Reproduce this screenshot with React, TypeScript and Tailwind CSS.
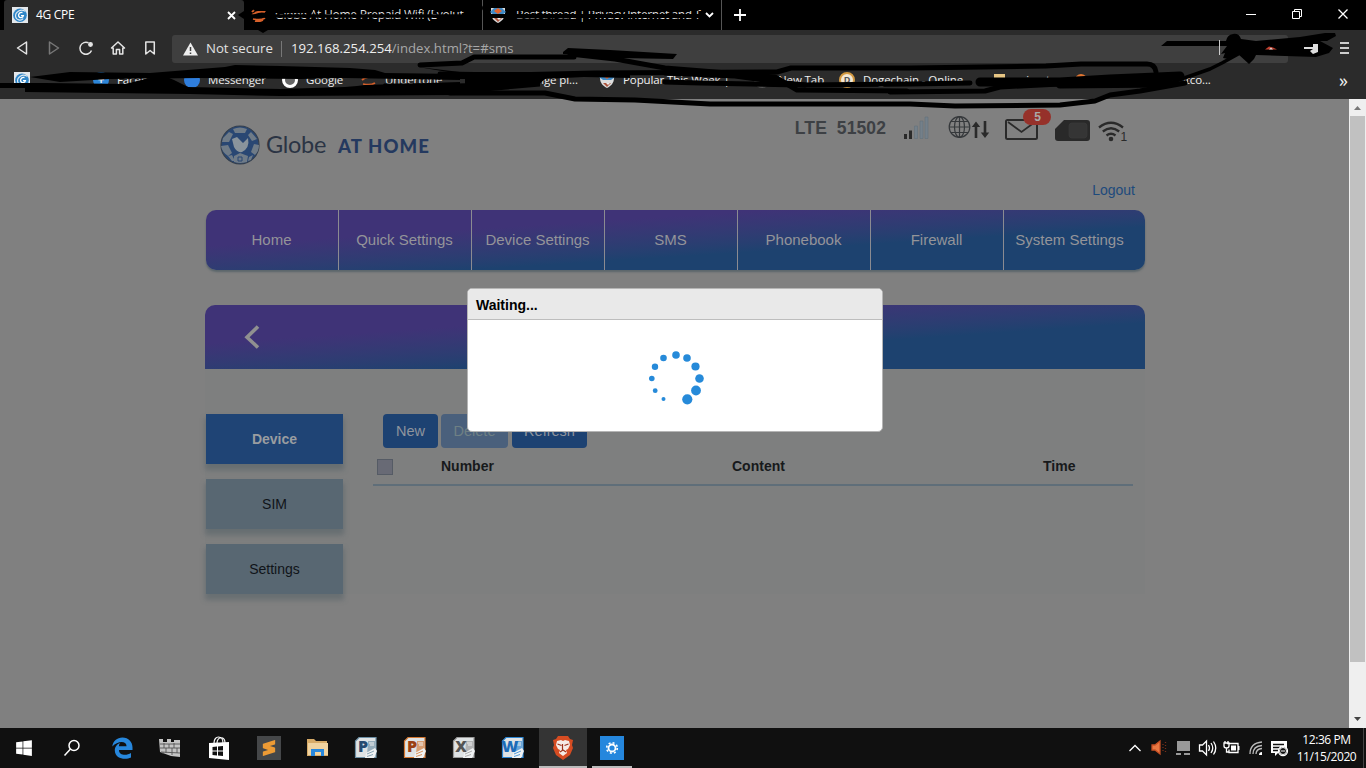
import { ReactNode } from "react";
import { SiSublimetext } from "react-icons/si";
import { FaWindows } from "react-icons/fa";
import { clsx } from "clsx";

const navItems = [
  "Home",
  "Quick Settings",
  "Device Settings",
  "SMS",
  "Phonebook",
  "Firewall",
];

const spinnerDots = [
  { x: 27, y: 4, r: 3.8 },
  { x: 38, y: 7, r: 3.8 },
  { x: 46.5, y: 15.5, r: 4.1 },
  { x: 50.5, y: 27.5, r: 4.3 },
  { x: 47, y: 39.5, r: 4.9 },
  { x: 38.3, y: 48.3, r: 5.1 },
  { x: 14.5, y: 48, r: 2 },
  { x: 6.2, y: 39.7, r: 2.4 },
  { x: 2.8, y: 27.5, r: 2.8 },
  { x: 6, y: 15.7, r: 3.2 },
  { x: 14.5, y: 7, r: 3.3 },
];

function GlobeFavicon() {
  return (
    <svg width="16" height="16" viewBox="0 0 16 16" className="shrink-0">
      <rect width="16" height="16" fill="#e4e8ec" />
      <circle cx="8" cy="8.3" r="6.8" fill="#2f86c8" />
      <path d="M13 4.2C8.500 1.500 3 5 3.600 9.500c.6 3.700 5.300 4.600 7.600 2.100" fill="none" stroke="#dfeaf3" strokeWidth="1.200" />
      <path d="M10.500 5.500C7.500 4.800 6 7.500 6.800 9.400c1 2 4.200 1.400 4.600-.8H9" fill="none" stroke="#fff" strokeWidth="1.300" />
    </svg>
  );
}

function ShieldFavicon() {
  return (
    <svg width="16" height="16" viewBox="0 0 16 16" className="shrink-0">
      <path d="M1 1h14v5c0 5-3 8-7 10-4-2-7-5-7-10z" fill="#ddd" />
      <path d="M0 5l4-4h8l4 4-4 3H4z" fill="#3f8ac6" />
      <path d="M4 4l4-3 4 3-4 3z" fill="#e0632f" />
      <path d="M4 11l4 4 4-4z" fill="#a9523b" />
      <path d="M7 11l2 2 2-2z" fill="#eee" />
    </svg>
  );
}

function SwirlFavicon() {
  return (
    <svg width="16" height="14" viewBox="0 0 16 14" className="shrink-0">
      <path d="M1 4c3-4 10-4 14-1M1 7c3-3 9-4 13-3M2 11c4 1 9 1 12-1M4 13c3 1 6 0 8-1" fill="none" stroke="#d7602a" strokeWidth="1.800" />
    </svg>
  );
}

function Tabs() {
  return (
    <div className="flex h-[30px] bg-black text-[12px] text-white">
      <div className="ml-1 flex w-[240px] items-center rounded-t-[3px] bg-[#2b2b2b] pl-2">
        <GlobeFavicon />
        <span className="ml-2 tracking-[-0.3px]">4G CPE</span>
        <svg width="9" height="9" viewBox="0 0 9 9" className="mr-[8px] ml-auto">
          <path d="M1 1l7 7M8 1L1 8" stroke="#fff" strokeWidth="1.800" />
        </svg>
      </div>
      <div className="flex w-[239px] items-center border-r border-[#555] pl-[7px]">
        <SwirlFavicon />
        <span className="ml-2 whitespace-nowrap tracking-[-0.25px] text-[#ddd]">
          Globe At Home Prepaid Wifi (Evolut
        </span>
      </div>
      <div className="flex w-[239px] items-center border-r border-[#555] pl-[7px]">
        <ShieldFavicon />
        <span className="ml-[10px] w-[187px] whitespace-nowrap tracking-[-0.42px] text-[#ddd]">
          Best thread | Privacy Internet and T
        </span>
        <svg width="9" height="6" viewBox="0 0 9 6" className="ml-[2px]">
          <path d="M1 1l3.500 3.500L8 1" fill="none" stroke="#fff" strokeWidth="1.800" />
        </svg>
      </div>
      <div className="flex w-[36px] items-center justify-center">
        <svg width="12" height="12" viewBox="0 0 12 12">
          <path d="M6 0v12M0 6h12" stroke="#fff" strokeWidth="1.800" />
        </svg>
      </div>
      <div className="mr-[17px] ml-auto flex items-center">
        <svg width="104" height="12" viewBox="0 0 104 12" fill="none" stroke="#fff">
          <path d="M1 5.500h10M47.500 2.500h7v7h-7zM49.500 2.500v-2h7v7h-2" />
          <path d="M93.500 0.500l9 9M102.500 0.500l-9 9" strokeWidth="1.300" />
        </svg>
      </div>
    </div>
  );
}

function Toolbar() {
  return (
    <div className="flex h-9 items-center bg-[#2b2b2b] text-[13px]">
      <svg width="172" height="36" viewBox="0 0 172 36" fill="none" stroke="#e4e4e4" strokeWidth="1.500" strokeLinejoin="round">
        <path d="M17.500 18l9-6v12z" />
        <path d="M58.500 18l-9-6v12z" stroke="#777" />
        <path d="M91.500 20.500A6 6 0 1 1 88.500 12.800" />
        <circle cx="90.500" cy="14.500" r="1.700" fill="#e4e4e4" />
        <path d="M111.500 18l6.500-6 6.500 6h-1.700v6h-3.200v-4.500h-3.200V24h-3.200v-6z" />
        <path d="M145.800 12h8.500v12l-4.200-3.500-4.300 3.500z" />
      </svg>
      <div className="mt-px flex h-7 w-[1116px] items-center rounded-[3px] bg-[#3f3f3f] pl-[11px] whitespace-nowrap">
        <svg width="15" height="14" viewBox="0 0 15 14">
          <path d="M7.500 0.500L15 13.500H0z" fill="#eee" />
          <path d="M7.500 5v4M7.500 10.500v1.500" stroke="#3f3f3f" strokeWidth="1.500" />
        </svg>
        <span className="ml-2 text-[13.2px] text-[#e2e2e2]">Not secure</span>
        <span className="ml-2 h-4 w-px bg-[#777]" />
        <span className="ml-[9px] text-[13.200px] text-[#eee]">
          192.168.254.254
          <span className="text-[#a8a8a8]">/index.html?t=#sms</span>
        </span>
      </div>
      <div className="mr-[17px] ml-auto flex flex-col gap-[3px]">
        <i className="h-[2px] w-[9px] bg-[#ccc]" />
        <i className="h-[2px] w-[9px] bg-[#ccc]" />
        <i className="h-[2px] w-[9px] bg-[#ccc]" />
      </div>
    </div>
  );
}

function Bookmark({ className, icon, label }: { className: string; icon: ReactNode; label: string }) {
  return (
    <div className={clsx("flex shrink-0 items-center gap-2", className)}>
      {icon}
      <span className="tracking-[-0.1px] whitespace-nowrap">{label}</span>
    </div>
  );
}

function Bookmarks() {
  return (
    <div className="flex h-[33px] items-center overflow-hidden bg-[#2b2b2b] pb-[6px] pl-[14px] text-[11.5px] text-[#f0f0f0]">
      <Bookmark className="w-[79px]" icon={<GlobeFavicon />} label="" />
      <Bookmark className="w-[91px]" icon={<i className="flex size-4 items-center justify-center rounded-full bg-[#2d86d8] font-bold not-italic">+</i>} label="Facebook" />
      <Bookmark className="w-[98px]" icon={<i className="size-4 rounded-full bg-[#2f7edd]" />} label="Messenger" />
      <Bookmark className="w-[79px]" icon={<i className="size-4 rounded-full border-[3px] border-white bg-[#666]" />} label="Google" />
      <Bookmark className="w-[176px]" icon={<SwirlFavicon />} label="Undertone" />
      <Bookmark className="w-[62px]" icon={null} label="nge pl..." />
      <Bookmark className="w-[155px]" icon={<ShieldFavicon />} label="Popular This Week |" />
      <Bookmark className="w-[85px]" icon={<i className="size-4 rounded-full bg-[#555]" />} label="New Tab" />
      <Bookmark className="w-[155px]" icon={<i className="flex size-4 items-center justify-center rounded-full border-2 border-[#d39a42] bg-[#f4e8d5] text-[9px] font-bold text-[#555] not-italic">D</i>} label="Dogechain - Online" />
      <Bookmark className="w-[81px]" icon={<i className="h-3 w-[11px] bg-[#e7c684]" />} label="animator" />
      <Bookmark className="w-[108px]" icon={<i className="size-3 rounded-full bg-[#e27632]" />} label="" />
      <Bookmark className="" icon={null} label="itco..." />
      <span className="mr-[18px] ml-auto text-[18px] leading-none">»</span>
    </div>
  );
}

// Freehand marker strokes lying over the browser chrome
function Scribbles() {
  return (
    <svg className="pointer-events-none absolute top-0 left-0" width="1366" height="115" viewBox="0 0 1366 115">
      <g fill="none" stroke="#000" strokeLinejoin="round" strokeLinecap="round">
        <path d="M247 16H478" strokeWidth="3.500" />
        <path d="M256 8h50M470 8h10" strokeWidth="6" />
        <path d="M275 10h35M435 8h40" strokeWidth="6" />
        <path d="M440 19h28" strokeWidth="5" />
        <path d="M486 16h215" strokeWidth="4" />
        <path d="M512 8h185" strokeWidth="6" />
        <path d="M512 20.500h58M585 21h15M612 21h84" strokeWidth="4" />
        <path d="M420 65l42-2 12-6 100 0" strokeWidth="5" />
        <path d="M570 54l45 5 50 9 50 4 60 5 22 13 110 1" strokeWidth="5" />
        <path d="M440 74l70 1 85-2 182-1 14-4h120l135-2 35-2h66q8 0 9 8" strokeWidth="5" />
        <path d="M665 73l70 3 50 7 20 2" strokeWidth="5" />
        <path d="M665 82l35 1 100 2 110-1 60-1" strokeWidth="5" />
        <path d="M450 93h95l30 6 60 1 75 4 200 0 45 2 105-1 35-4 15-6 30-4 45-8" strokeWidth="5" />
        <path d="M890 92l95-1 15-4 60-3 110-5" strokeWidth="5" />
        <path d="M1170 83l40-14 12-6 18-10" strokeWidth="3.500" />
        <path d="M980 82h80l50-3 70-3M1060 84l110-1" strokeWidth="9" />
      </g>
      <path d="M30 77l40-5 80 1 75-6 10-2 45 1 70 2 25 2 10 3 75 1v6l-115-2-45 1-100-1-90 1-50 3z" />
      <path d="M0 83h45l80 1 37-9 12 5 14 7 92 2 65-2 12-1 8-1 95-3v13l-180 1-90-2-165-2v-4H0z" />
      <path d="M418 67l42 5h140l30 3v3l-46-1-39 2-8 7h-72v-7h-70v-5h65z" />
      <path d="M384 83.500h70l86-2v5l-90 8-70-5z" />
      <path d="M563 52l5-4 42 2 67 4-4 5-53-1-57-4z" />
      <path d="M1161 46l6-5h59q1-6 7-7 6-1 8 5l15 2 44-4 25-4h10l1 3-9 5h-7l13 7-4 5-13 4-60-2-2 4-5 5-11-10-10 5-5-1 2-5-4 1 6-8z" />
      <path d="M1265 49.500l4-3 4 1 4 2z" fill="#c2402f" />
      <path d="M1269 49.500l2-2 2 2z" fill="#ddd" />
      <path d="M1304 47h9v-3h5v8l-5 2-3-3 3-2h-9z" fill="#ddd" />
      <path d="M1219.500 40v15" stroke="#ccc" />
      <path d="M238 15l6-4v8zM258 30l5 3 5-3z" />
    </svg>
  );
}

function StatusIcons() {
  return (
    <svg width="230" height="40" viewBox="900 106 230 40" className="shrink-0">
      <g fill="#2a2a2a">
        <path d="M904 134h3v5h-3zM909 130.500h3v8.500h-3z" />
      </g>
      <g fill="#74808a" stroke="#63717b" strokeWidth=".6">
        <path d="M914.500 126h3v12.500h-3zM920 121h3v17.500h-3zM925 117h3v21.500h-3z" />
      </g>
      <g fill="none" stroke="#35383b" strokeWidth="1.200">
        <circle cx="959.500" cy="127" r="10.300" />
        <ellipse cx="959.500" cy="127" rx="5" ry="10.300" />
        <path d="M959.500 117v20M949 127h21M951 121.500h17M951 132.500h17" />
      </g>
      <path d="M976 138v-14M985 121v14" stroke="#2a2a2a" strokeWidth="2.600" />
      <path d="M971.800 127l4.200-5.500 4.200 5.500zM980.800 132.500l4.200 5.500 4.200-5.500z" fill="#2a2a2a" />
      <rect x="1006" y="120" width="31" height="19" rx="1.500" fill="none" stroke="#2a2a2a" strokeWidth="2" />
      <path d="M1008 122l13.500 10 13.500-10" fill="none" stroke="#2a2a2a" strokeWidth="1.700" />
      <rect x="1023" y="109" width="28" height="16" rx="8" fill="#96312a" />
      <text x="1037.500" y="121" textAnchor="middle" fontSize="12" fontWeight="bold" fill="#a9a9a9">5</text>
      <path d="M1064 120h23q3 0 3 3v15q0 3-3 3h-29q-3 0-3-3v-9z" fill="#292929" />
      <rect x="1069" y="123" width="18" height="15" rx="3" fill="#353535" stroke="#3b3b3b" strokeWidth=".7" />
      <g fill="none" stroke="#2a2a2a" strokeWidth="2.300">
        <path d="M1099 127.500q12-9.500 24 0M1102.800 131.500q8.200-6.500 16.400 0M1106.500 135.500q4.500-3.500 9 0" />
      </g>
      <circle cx="1111" cy="139" r="2.300" fill="#2a2a2a" />
      <text x="1120.500" y="141" fontSize="12" fill="#2a2a2a">1</text>
    </svg>
  );
}

function GlobeLogo() {
  return (
    <div className="mt-[26px] flex h-10 items-center self-start pl-[15px]">
      <svg width="40" height="40" viewBox="0 0 40 40">
        <circle cx="20" cy="20" r="19" fill="#294773" stroke="#343f4d" strokeWidth="1.200" />
        <g fill="#6f7b87">
          <path d="M13 4q7-3 14 0l-2 4H15zM3 13l6-6 4 2-4 8H2zM31 7l6 7-5 2-4-6zM1 21l7-1 4 8-4 3q-6-4-7-10zM39 20l-5-1-3 8 4 3q4-4 4-10zM14 31l6-3 8 3-1 6q-7 2-13 0zM8 31l4-1 3 6-3 0zM29 32l4-2-2 5-3 1z" />
          <path d="M12 14l5-2 6 6 5-5q2 10-6 14-5 1-8-5z" fill="#8a949c" />
        </g>
        <path d="M18 36v-4h4v4z" fill="none" stroke="#294773" />
      </svg>
      <span className="ml-[6px] font-[Lato] text-[23.5px] leading-none tracking-[-0.3px] text-[#2b3444]">Globe</span>
      <span className="mt-[3px] ml-[12px] font-[Lato] text-[18.5px] leading-none font-black tracking-[1.1px] text-[#24395f]">AT HOME</span>
    </div>
  );
}

function SideButton({ label, active }: { label: string; active?: boolean }) {
  return (
    <div
      className={clsx(
        "flex h-[50px] w-[137px] items-center justify-center text-[14px] shadow-[0_5px_5px_1px_rgba(75,90,98,0.45)]",
        active ? "bg-[#1f4475] font-bold text-[#9a9da0]" : "bg-[#586772] text-[#101419]"
      )}
    >
      {label}
    </div>
  );
}

function RouterPage() {
  return (
    <div className="h-[629px] w-[1349px] bg-[#808080] pl-[205px] font-['Liberation_Sans',sans-serif]">
      <div className="w-[940px]">
        <header className="flex h-[111px] justify-between">
          <GlobeLogo />
          <div className="mr-[10px] flex flex-col items-end pt-[7px]">
            <div className="flex items-start">
              <span className="mt-[12px] mr-[14px] text-[17.500px] leading-[21px] font-bold tracking-[0.1px] whitespace-pre text-[#3d4044]">LTE  51502</span>
              <div className="mr-[5px]">
                <StatusIcons />
              </div>
            </div>
            <span className="mt-[34px] text-[14px] leading-5 text-[#1d4a7c]">Logout</span>
          </div>
        </header>

        <nav className="ml-px flex h-[60px] overflow-hidden rounded-[10px] bg-linear-to-br from-[#3f3377] from-30% to-[#1d426f] to-64% text-[15px] text-[#949499] shadow-[0_2px_2px_rgba(60,80,90,0.55)]">
          {navItems.map((item) => (
            <div key={item} className="flex w-[133px] items-center justify-center border-r border-[#8b8b91] pr-px">
              {item}
            </div>
          ))}
          <div className="flex w-[131px] items-center justify-center">System Settings</div>
        </nav>

        <div className="mt-[35px] flex h-16 items-center rounded-t-[10px] bg-linear-to-br from-[#3f3377] from-30% to-[#1d426f] to-64% pl-[39px]">
          <svg width="16" height="24" viewBox="0 0 16 24">
            <path d="M14 1.500L3 12.300 14 22.500" fill="none" stroke="#909090" strokeWidth="3.600" />
          </svg>
        </div>

        <div className="flex bg-[#7e7f7f] pt-[45px]">
          <div className="flex flex-col gap-[15px] pl-px">
            <SideButton label="Device" active />
            <SideButton label="SIM" />
            <SideButton label="Settings" />
          </div>
          <div className="ml-[30px] w-[760px]">
            <div className="flex gap-[3px] pl-[10px] text-[14.500px] text-[#8f959d]">
              <div className="flex h-[34px] w-[55px] items-center justify-center rounded-[4px] bg-[#1d4272] pt-px">New</div>
              <div className="flex h-[34px] w-[67px] items-center justify-center rounded-[4px] bg-[#4a607c] pt-px text-[#6f8084]">Delete</div>
              <div className="ml-px flex h-[34px] w-[75px] items-center justify-center rounded-[4px] bg-[#1d4272] pt-px">Refresh</div>
            </div>
            <div className="flex h-[38px] items-center border-b-2 border-[#5f6e79] pl-1 text-[14px] font-bold text-[#17191b]">
              <i className="mt-px size-4 border border-[#555b65] bg-[#686a75]" />
              <span className="ml-12 w-[291px]">Number</span>
              <span className="w-[311px]">Content</span>
              <span>Time</span>
            </div>
          </div>
        </div>
      </div>
    </div>
  );
}

function WaitingDialog() {
  return (
    <div className="absolute top-[288px] left-[467px] h-[144px] w-[416px] overflow-hidden rounded-[5px] border border-[#b5b5b5] bg-white font-['Liberation_Sans',sans-serif]">
      <div className="flex h-[31px] items-center border-b border-[#bdbdbd] bg-[#e9e9e9] pt-[2px] pl-2 text-[14px] font-bold text-black">
        Waiting...
      </div>
      <div className="flex justify-center pt-[31px] pl-[3px]">
        <svg width="56" height="56" viewBox="0 0 56 56" className="overflow-visible" fill="#268ad9">
          {spinnerDots.map((d, i) => (
            <circle key={i} cx={d.x} cy={d.y} r={d.r} />
          ))}
        </svg>
      </div>
    </div>
  );
}

function Scrollbar() {
  return (
    <div className="flex w-[17px] flex-col items-center bg-[#efefef]">
      <svg width="17" height="17" viewBox="0 0 17 17">
        <path d="M5 11l3.500-4 3.500 4z" fill="#777" />
      </svg>
      <div className="h-[546px] w-[15px] bg-[#c1c1c1]" />
      <svg width="17" height="17" viewBox="0 0 17 17" className="mt-auto">
        <path d="M5 6l3.500 4L12 6z" fill="#444" />
      </svg>
    </div>
  );
}

function OfficeIcon({ letter, color, border }: { letter: string; color: string; border: string }) {
  return (
    <svg width="24" height="24" viewBox="0 0 24 24" className="-ml-[3px]">
      <path d="M5 1.500h17v20H1.500V5z" fill="#dfe3e5" stroke={border} strokeWidth="1.200" />
      <path d="M14 5h7v15h-8z" fill={border} opacity=".65" />
      <path d="M15 7h5M16 9h4" stroke="#eee" />
      <text x="9" y="16" textAnchor="middle" fontSize="16" fontWeight="900" fill={color}>{letter}</text>
      <path d="M12 17l9-5 2 3-3 7h-9z" fill="#f0f2f3" />
      <path d="M13 18l7-3M13 20.500l6-2" stroke={border} strokeWidth=".8" />
    </svg>
  );
}

function TaskSlot({ children }: { children: ReactNode }) {
  return <div className="flex h-10 w-[49px] items-center justify-center">{children}</div>;
}

function Taskbar() {
  return (
    <div className="flex h-10 bg-[#101010] text-white">
      <TaskSlot>
        <FaWindows size={18} className="ml-[-1px]" />
      </TaskSlot>
      <TaskSlot>
        <svg width="18" height="18" viewBox="0 0 18 18" fill="none" stroke="#fff" strokeWidth="1.500" className="ml-[-4px]">
          <circle cx="11" cy="6.500" r="5" />
          <path d="M7.500 10L1.500 16.500" />
        </svg>
      </TaskSlot>
      <TaskSlot>
        <svg width="21" height="22" viewBox="0 0 21 22" fill="#2787dc">
          <path d="M0.300 9.500C1 4 5 .5 10.500 .5c6 0 10 4.500 10 10V13H7c0 5.500 7.500 6 12 3v4.500C14 23 3 22.500 2.800 13.500 2.700 9.800 5.200 7 8 6 7.300 7 7 8.200 6.900 9.200h7.600C14.800 3.500 5.500 3.500 0.300 9.500z" />
        </svg>
      </TaskSlot>
      <TaskSlot>
        <svg width="22" height="20" viewBox="0 0 22 20" className="-ml-[3px]">
          <path d="M0 1h4v3h4V1h4v3h3V2h6v17l-9-1L1 14z" fill="#c4c4c4" />
          <path d="M1 6h20M1 10h20M2 14l19 1M5 5v5M10 6v4M15 5v5M7 10v5M13 10v7M18 10v5M4 14v2" stroke="#555" strokeWidth=".9" fill="none" />
        </svg>
      </TaskSlot>
      <TaskSlot>
        <svg width="22" height="25" viewBox="0 0 22 25" className="-ml-[3px]">
          <path d="M1 7l20-1v18L1 22z" fill="#fff" />
          <path d="M6 7c0-8 9-8 9 0M9 7c0-7 8-7 8 0" fill="none" stroke="#fff" strokeWidth="1.200" />
          <path d="M4.500 11l4.500-.5v4H4.500zM10 10.500l5-.5v4.500h-5zM4.500 15.500H9v4l-4.500-.5zM10 15.500h5V20l-5-.5z" fill="#111" />
        </svg>
      </TaskSlot>
      <TaskSlot>
        <div className="-ml-[1px] flex size-6 items-center justify-center bg-[#454749]">
          <SiSublimetext size={16} color="#ed9b35" />
        </div>
      </TaskSlot>
      <TaskSlot>
        <svg width="22" height="20" viewBox="0 0 22 20" className="-ml-[2px]">
          <path d="M0 1h7l2 2h11v4h1v11H0z" fill="#d7ab68" />
          <path d="M1 5h20v12H1z" fill="#f0d3a0" />
          <path d="M4 18v-7h13v7h-3v-4H8v4z" fill="#2787dc" />
        </svg>
      </TaskSlot>
      <TaskSlot><OfficeIcon letter="P" color="#254b72" border="#6c8fa5" /></TaskSlot>
      <TaskSlot><OfficeIcon letter="P" color="#9b3f13" border="#d47832" /></TaskSlot>
      <TaskSlot><OfficeIcon letter="X" color="#555" border="#999" /></TaskSlot>
      <TaskSlot><OfficeIcon letter="W" color="#1d6cb8" border="#2d86d2" /></TaskSlot>
      <div className="flex w-12 items-center justify-center border-b-2 border-[#bbb] bg-[#343434]">
        <svg width="22" height="25" viewBox="0 0 22 25">
          <path d="M6 1h10l2 3 3 1-1 5 1 3-3 7-7 5-7-5-3-7 1-3-1-5 3-1z" fill="#d64c22" />
          <path d="M5 6l4-1 2 1 2-1 4 1 1 4-2 4-2 1 1 3-4 3-4-3 1-3-2-1-2-4z" fill="#f5ece7" />
          <path d="M5.500 9l4 1.500M16.500 9l-4 1.500M10.500 9v6M8 17l3-2 3 2" stroke="#9d321b" strokeWidth="1.200" fill="none" />
        </svg>
      </div>
      <div className="ml-[5px] flex w-10 items-center justify-center border-b-2 border-[#bbb] pt-[2px]">
        <div className="flex size-6 items-center justify-center bg-[#2587dd]">
          <svg width="14" height="14" viewBox="0 0 14 14" fill="none" stroke="#fff">
            <circle cx="7" cy="7" r="3.500" strokeWidth="1.800" />
            <circle cx="7" cy="7" r="5.300" strokeWidth="1.600" strokeDasharray="2 2.160" />
          </svg>
        </div>
      </div>

      <div className="ml-auto flex items-center">
        <svg width="166" height="30" viewBox="1126 733 166 30" fill="none" stroke="#fff" strokeWidth="1.300">
          <path d="M1129.500 751l5.500-5.500 5.500 5.500" />
          <path d="M1152 745h3l5-4v13l-5-4h-3z" fill="#e97843" stroke="#c64f24" />
          <path d="M1163 744v7M1165.500 742v11" stroke="#762f1a" strokeDasharray="1 2" />
          <path d="M1177 741h13v10h-13zM1176 753h5v2h-5zM1184 753h6v2h-6z" fill="#999" stroke="none" />
          <path d="M1199.500 745h3l4-4v14l-4-4h-3zM1208.500 745q2 3 0 6M1211 743q3.500 5 0 10M1213.500 741.500q4.500 6.500 0 13" />
          <path d="M1227 743.500h11v9h-9v-3M1224 743h5v3q0 2-2.500 2t-2.500-2zM1225 743v-2M1228 743v-2M1226.500 748v4h2" />
          <path d="M1231 745.500h5v5h-5zM1238 746h1.500v4h-1.500z" fill="#fff" stroke="none" />
          <path d="M1250 754q0-11 12-12M1253 754q0-8 9-8.500M1256 754q0-5 6-5.500" stroke="#bbb" />
          <path d="M1259 755q0-3 3-3v3z" fill="#fff" stroke="none" />
          <path d="M1271 741h16v12h-9l-3 3v-3h-4z" fill="#fff" stroke="none" />
          <path d="M1273 744.500h11M1273 747.500h7M1273 750.500h5" stroke="#111" />
          <circle cx="1283" cy="751" r="4.500" fill="#101010" />
          <circle cx="1283" cy="751" r="3.500" strokeWidth="1" />
          <path d="M1281 751h4" strokeWidth="1" />
        </svg>
        <div className="w-[69px] text-center text-[12px] leading-[17px] tracking-[-0.4px]">
          <div>12:36 PM</div>
          <div>11/15/2020</div>
        </div>
        <span className="ml-0.5 h-10 w-px bg-[#444]" />
        <span className="w-[2px]" />
      </div>
    </div>
  );
}

export default function App() {
  return (
    <div className="relative h-[768px] w-[1366px] overflow-hidden bg-black font-['Open_Sans','Noto_Sans',sans-serif]">
      <Tabs />
      <Toolbar />
      <Bookmarks />
      <div className="flex h-[629px]">
        <RouterPage />
        <Scrollbar />
      </div>
      <Taskbar />
      <Scribbles />
      <WaitingDialog />
    </div>
  );
}
